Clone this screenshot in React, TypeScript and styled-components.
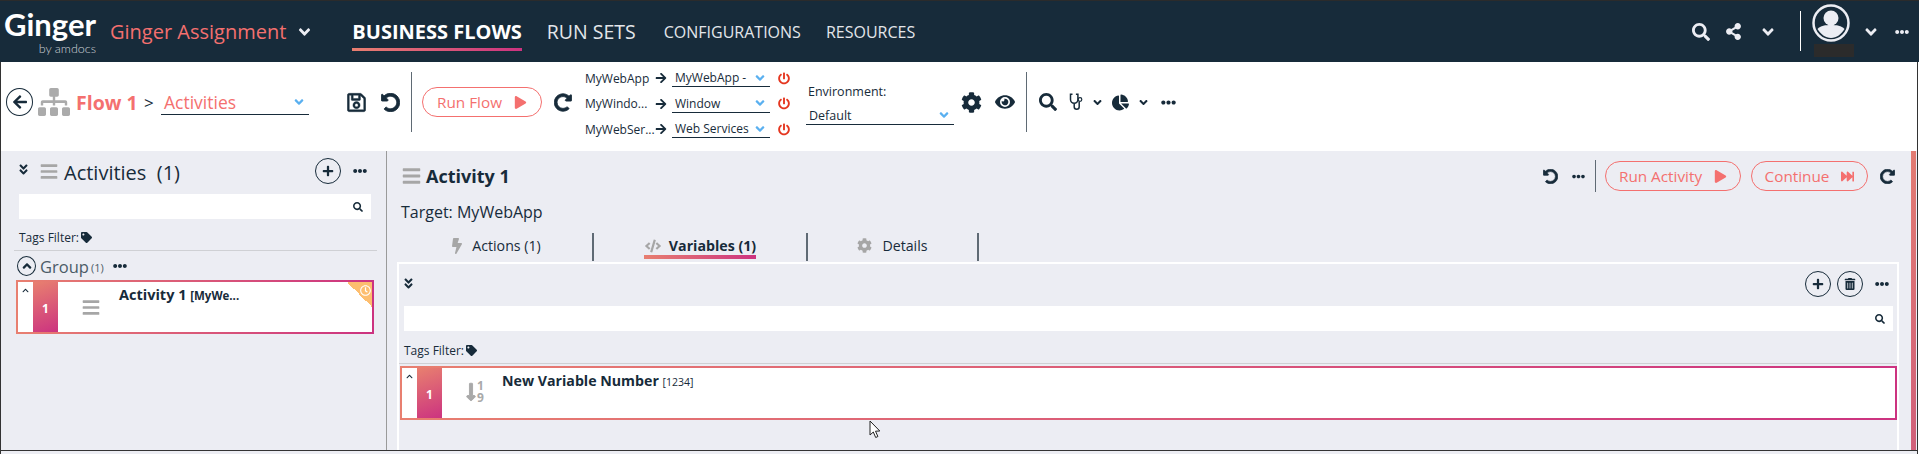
import styled, { createGlobalStyle } from 'styled-components';
import {
  FaAngleDoubleDown,
  FaAngleDown,
  FaAngleUp,
  FaArrowLeft,
  FaArrowRight,
  FaBars,
  FaBolt,
  FaChartPie,
  FaChevronUp,
  FaCode,
  FaCog,
  FaEllipsisH,
  FaEye,
  FaFastForward,
  FaLongArrowAltDown,
  FaPlay,
  FaPlus,
  FaPowerOff,
  FaRedoAlt,
  FaRegClock,
  FaRegSave,
  FaSearch,
  FaShareAlt,
  FaSitemap,
  FaTag,
  FaTrashAlt,
  FaUndoAlt,
} from 'react-icons/fa';

const NAVY = '#172b3a';
const CORAL = '#f4706f';
const PANEL = '#ecedf3';
const GRAD = 'linear-gradient(90deg, #e87f70, #cc3380)';

const agents = [
  { label: 'MyWebApp', value: 'MyWebApp -' },
  { label: 'MyWindo...', value: 'Window' },
  { label: 'MyWebSer...', value: 'Web Services' },
];

const App = () => (
  <Page>
    <GlobalStyle />
    <Header>
      <Logo>
        <LogoName>Ginger</LogoName>
        <LogoBy>by amdocs</LogoBy>
      </Logo>
      <ProjectName>Ginger Assignment</ProjectName>
      <Icon $ml={12} $w={13} $size={18} $color="#ecedf3"><FaAngleDown /></Icon>
      <NavItem $active $ml={41} $size={20}>BUSINESS FLOWS</NavItem>
      <NavItem $ml={25} $size={19.500}>RUN SETS</NavItem>
      <NavItem $ml={28} $size={16}>CONFIGURATIONS</NavItem>
      <NavItem $ml={25} $size={16}>RESOURCES</NavItem>
      <Spacer />
      <Icon $w={18} $size={18} $color="#ecedf3"><FaSearch /></Icon>
      <Icon $ml={15} $w={17} $size={17} $color="#ecedf3"><FaShareAlt /></Icon>
      <Icon $ml={20} $w={12} $size={18} $color="#ecedf3"><FaAngleDown /></Icon>
      <HeaderDivider />
      <Avatar viewBox="0 0 38 38">
        <circle cx="19" cy="19" r="17.500" fill="none" stroke="#ecedf3" strokeWidth="2.500" />
        <circle cx="19" cy="14" r="7.500" fill="#ecedf3" />
        <path d="M5.500 25c3-3.500 8-4 13.500-4s10.500.5 13.500 4c-3 5-8 9-13.500 9s-10.500-4-13.500-9z" fill="#ecedf3" />
      </Avatar>
      <Icon $ml={15} $w={12} $size={18} $color="#ecedf3"><FaAngleDown /></Icon>
      <Icon $ml={18} $w={14} $size={14} $color="#ecedf3"><FaEllipsisH /></Icon>
      <Redacted />
    </Header>

    <Body>
      <Toolbar>
        <BackButton><FaArrowLeft /></BackButton>
        <FlowMapIcon preserveAspectRatio="none" />
        <FlowName>Flow 1</FlowName>
        <Crumb>&gt;</Crumb>
        <Select $ml={8} $w={148} $h={25} $size={17.500} $color={CORAL}>
          <span>Activities</span>
          <FaAngleDown />
        </Select>
        <Icon $ml={38} $w={19} $size={21} $bold={10}><FaRegSave /></Icon>
        <Icon $ml={14} $w={20} $size={19} $bold={24}><FaUndoAlt /></Icon>
        <VDivider $ml={11} />
        <PillButton $ml={10} $w={120}>
          Run Flow
          <FaPlay />
        </PillButton>
        <Icon $ml={12} $w={18} $size={19} $bold={24}><FaRedoAlt /></Icon>
        <AgentGrid>
          {agents.map((a) => (
            <AgentRow key={a.label}>
              <AgentLabel>{a.label}</AgentLabel>
              <Icon $w={12} $size={12}><FaArrowRight /></Icon>
              <Select $ml={5} $w={98} $h={18} $size={12}>
                <span>{a.value}</span>
                <FaAngleDown />
              </Select>
              <Icon $ml={8} $w={12} $size={13} $color="#e5361f"><FaPowerOff /></Icon>
            </AgentRow>
          ))}
        </AgentGrid>
        <EnvColumn>
          <EnvLabel>Environment:</EnvLabel>
          <Select $ml={0} $w={148} $h={19} $size={12.500}>
            <span>Default</span>
            <FaAngleDown />
          </Select>
        </EnvColumn>
        <Icon $ml={7} $w={21} $size={21}><FaCog /></Icon>
        <Icon $ml={13} $w={20} $size={20}><FaEye /></Icon>
        <VDivider $ml={11} />
        <Icon $ml={12} $w={18} $size={18}><FaSearch /></Icon>
        <Stethoscope viewBox="0 0 14 18">
          <path d="M3.500 1.200H1.500v5.300a3.700 3.700 0 0 0 7.400 0V1.200H6.900M5.200 10.500v3.300a2.500 2.500 0 0 0 5 0V8.500" fill="none" stroke={NAVY} strokeWidth="1.500" />
          <circle cx="11" cy="6.500" r="1.800" fill="none" stroke={NAVY} strokeWidth="1.200" />
        </Stethoscope>
        <Icon $ml={10} $w={9} $size={13}><FaAngleDown /></Icon>
        <Icon $ml={10} $w={17} $size={17}><FaChartPie /></Icon>
        <Icon $ml={10} $w={9} $size={13}><FaAngleDown /></Icon>
        <Icon $ml={13} $w={15} $size={15}><FaEllipsisH /></Icon>
      </Toolbar>

      <Main>
        <LeftPanel>
          <PanelHead>
            <Icon $ml={17} $w={11} $size={13} $mt={-3}><FaAngleDoubleDown /></Icon>
            <Icon $ml={11} $w={18} $size={19} $color="#a6a6a6"><FaBars /></Icon>
            <PanelTitle>Activities&nbsp; (1)</PanelTitle>
            <Spacer />
            <RoundButton><FaPlus /></RoundButton>
            <Icon $ml={12} $w={14} $size={14}><FaEllipsisH /></Icon>
          </PanelHead>
          <SearchBar $mt={10} $mx="15px 0 18px">
            <FaSearch />
          </SearchBar>
          <TagsFilter $mt={10} $ml={18}>Tags Filter:<FaTag /></TagsFilter>
          <Rule $mx="5px 9px 0 13px" />
          <GroupRow>
            <GroupToggle><FaAngleUp /></GroupToggle>
            <GroupName>Group</GroupName>
            <GroupCount>(1)</GroupCount>
            <Icon $ml={9} $w={14} $size={14}><FaEllipsisH /></Icon>
          </GroupRow>
          <ItemCard $mx="4px 12px 0 15px">
            <Caret><FaChevronUp /></Caret>
            <Strip>1</Strip>
            <Icon $ml={24} $w={18} $size={19} $color="#a6a6a6"><FaBars /></Icon>
            <ItemTitle $ml={19}>Activity 1 <small>[MyWe...</small></ItemTitle>
            <Corner><FaRegClock /></Corner>
          </ItemCard>
        </LeftPanel>

        <RightPanel>
          <RightColumn>
            <DetailHead>
              <Icon $ml={15} $w={19} $size={20} $color="#a6a6a6"><FaBars /></Icon>
              <DetailTitle>Activity 1</DetailTitle>
              <Spacer />
              <Icon $w={15} $size={15} $bold={24}><FaUndoAlt /></Icon>
              <Icon $ml={14} $w={13} $size={13}><FaEllipsisH /></Icon>
              <VDivider $ml={10} $h={32} />
              <PillButton $ml={9} $w={136}>
                Run Activity
                <FaPlay />
              </PillButton>
              <PillButton $ml={10} $w={117}>
                Continue
                <FaFastForward />
              </PillButton>
              <Icon $ml={12} $w={15} $size={15} $bold={24}><FaRedoAlt /></Icon>
              <Icon $ml={16} $w={0} $size={1} />
            </DetailHead>
            <TargetLine>Target: MyWebApp</TargetLine>
            <Tabs>
              <Tab $w={193}>
                <TabLabel>
                  <Icon $w={10} $size={16} $color="#a6a6a6"><FaBolt /></Icon>
                  Actions (1)
                </TabLabel>
              </Tab>
              <Tab $w={214}>
                <TabLabel $active>
                  <Icon $w={18} $size={16} $color="#a6a6a6"><FaCode /></Icon>
                  Variables (1)
                </TabLabel>
              </Tab>
              <Tab $w={171}>
                <TabLabel>
                  <Icon $w={15} $size={15} $color="#a6a6a6"><FaCog /></Icon>
                  Details
                </TabLabel>
              </Tab>
            </Tabs>
            <TabBody>
              <TabBodyHead>
                <Icon $ml={4} $w={11} $size={13} $mt={-2}><FaAngleDoubleDown /></Icon>
                <Spacer />
                <RoundButton><FaPlus /></RoundButton>
                <RoundButton $ml={6}><FaTrashAlt /></RoundButton>
                <Icon $ml={12} $w={14} $size={14}><FaEllipsisH /></Icon>
              </TabBodyHead>
              <SearchBar $mt={9} $mx="4px 0 5px">
                <FaSearch />
              </SearchBar>
              <TagsFilter $mt={11} $ml={5}>Tags Filter:<FaTag /></TagsFilter>
              <Rule $mx="5px 0 0 0" />
              <ItemCard $mx="2px 0 0 1px">
                <Caret><FaChevronUp /></Caret>
                <Strip>1</Strip>
                <SortIcon>
                  <FaLongArrowAltDown />
                  <SortDigits>
                    <span>1</span>
                    <span>9</span>
                  </SortDigits>
                </SortIcon>
                <ItemTitle $ml={18} $size={14.200}>New Variable Number <VarValue>[1234]</VarValue></ItemTitle>
              </ItemCard>
            </TabBody>
          </RightColumn>
          <ScrollThumb />
        </RightPanel>
      </Main>
      <FootLine />
    </Body>

    <Pointer viewBox="0 0 12 19">
      <path d="M1 1v14l3.300-3 2.400 5.500 2.200-1-2.400-5.300 4.300-.2z" fill="#fff" stroke="#222" strokeWidth="1" />
    </Pointer>
  </Page>
);

export default App;

const GlobalStyle = createGlobalStyle`
  html, body {
    margin: 0;
    padding: 0;
    background: #fff;
  }
  * {
    box-sizing: border-box;
  }
`;

const Page = styled.div`
  position: relative;
  width: 1919px;
  height: 454px;
  overflow: hidden;
  font-family: 'Open Sans', 'Liberation Sans', sans-serif;
  color: ${NAVY};
`;

const Spacer = styled.div`
  flex: 1;
`;

const Icon = styled.span<{
  $ml?: number;
  $mt?: number;
  $w: number;
  $size: number;
  $color?: string;
  $bold?: number;
}>`
  display: inline-flex;
  align-items: center;
  justify-content: center;
  flex: none;
  margin-left: ${(p) => p.$ml ?? 0}px;
  margin-top: ${(p) => p.$mt ?? 0}px;
  width: ${(p) => p.$w}px;
  font-size: ${(p) => p.$size}px;
  color: ${(p) => p.$color ?? NAVY};
  ${(p) => p.$bold && `svg { stroke: currentColor; stroke-width: ${p.$bold}; }`}
`;

const Header = styled.header`
  position: relative;
  display: flex;
  align-items: center;
  height: 62px;
  padding-right: 10px;
  background: ${NAVY};
  border-top: 1px solid #2b2b2b;
`;

const Logo = styled.div`
  display: flex;
  flex-direction: column;
  align-items: flex-end;
  width: 96px;
  color: #fff;
`;

const LogoName = styled.div`
  font-family: Lato, 'Open Sans', sans-serif;
  font-size: 31px;
  font-weight: 700;
  line-height: 30px;
`;

const LogoBy = styled.div`
  margin-top: 3px;
  font-family: Lato, 'Open Sans', sans-serif;
  font-size: 12.500px;
  font-weight: 300;
  line-height: 13px;
  color: #cfd3d8;
`;

const ProjectName = styled.div`
  margin-left: 14px;
  font-size: 20px;
  color: ${CORAL};
`;

const NavItem = styled.div<{ $active?: boolean; $ml: number; $size: number }>`
  position: relative;
  display: flex;
  align-items: center;
  align-self: stretch;
  margin-left: ${(p) => p.$ml}px;
  font-size: ${(p) => p.$size}px;
  font-weight: ${(p) => (p.$active ? 700 : 400)};
  color: ${(p) => (p.$active ? '#fff' : '#e3e6ea')};
  ${(p) =>
    p.$active &&
    `&::after {
      content: '';
      position: absolute;
      left: 0;
      right: 0;
      bottom: 11px;
      height: 3px;
      background: ${GRAD};
    }`}
`;

const HeaderDivider = styled.div`
  width: 1px;
  height: 40px;
  margin: -1px 11px 0 26px;
  background: #fff;
`;

const Avatar = styled.svg`
  width: 38px;
  height: 38px;
  margin-top: -17px;
`;

const Redacted = styled.div`
  position: absolute;
  left: 1814px;
  top: 43px;
  width: 40px;
  height: 13px;
  background: #2b2b2b;
`;

const Body = styled.div`
  display: flex;
  flex-direction: column;
  width: 1918px;
  height: 392px;
  background: ${PANEL};
  border-left: 1px solid #333;
  border-right: 1px solid #333;
`;

const Toolbar = styled.div`
  display: flex;
  align-items: center;
  flex: none;
  height: 89px;
  padding: 0 0 9px 5px;
  background: #fff;
`;

const BackButton = styled.div`
  display: flex;
  align-items: center;
  justify-content: center;
  width: 27px;
  height: 28px;
  flex: none;
  border: 1.500px solid ${NAVY};
  border-radius: 50%;
  font-size: 16px;
`;

const FlowMapIcon = styled(FaSitemap)`
  flex: none;
  width: 32px;
  height: 28px;
  margin-left: 5px;
  color: #ababab;
`;

const FlowName = styled.div`
  width: 62px;
  margin-left: 6px;
  flex: none;
  font-size: 19.500px;
  font-weight: 700;
  color: ${CORAL};
  white-space: nowrap;
`;

const Crumb = styled.div`
  margin-left: 6px;
  width: 9px;
  flex: none;
  font-size: 17px;
`;

const Select = styled.div<{ $ml: number; $w: number; $h: number; $size: number; $color?: string }>`
  display: flex;
  align-items: center;
  justify-content: space-between;
  flex: none;
  margin-left: ${(p) => p.$ml}px;
  width: ${(p) => p.$w}px;
  height: ${(p) => p.$h}px;
  padding: 0 3px;
  border-bottom: 1px solid ${NAVY};
  font-size: ${(p) => p.$size}px;
  color: ${(p) => p.$color ?? NAVY};
  white-space: nowrap;
  svg {
    flex: none;
    color: #5ab0f0;
    font-size: 14px;
  }
`;

const VDivider = styled.div<{ $ml: number; $h?: number }>`
  flex: none;
  width: 1px;
  height: ${(p) => p.$h ?? 60}px;
  margin-left: ${(p) => p.$ml}px;
  background: #5f6a74;
`;

const PillButton = styled.div<{ $ml: number; $w: number }>`
  display: flex;
  align-items: center;
  justify-content: center;
  gap: 12px;
  flex: none;
  width: ${(p) => p.$w}px;
  height: 30px;
  margin-left: ${(p) => p.$ml}px;
  border: 1px solid ${CORAL};
  border-radius: 15px;
  font-size: 15.300px;
  color: ${CORAL};
  svg {
    font-size: 13px;
  }
`;

const AgentGrid = styled.div`
  display: flex;
  flex-direction: column;
  flex: none;
  gap: 3px;
  margin: 3px 0 0 13px;
`;

const AgentRow = styled.div`
  display: flex;
  align-items: center;
  height: 22.500px;
`;

const AgentLabel = styled.div`
  width: 70px;
  font-size: 12px;
  white-space: nowrap;
`;

const EnvColumn = styled.div`
  display: flex;
  flex-direction: column;
  flex: none;
  gap: 6px;
  margin: 4px 0 0 16px;
`;

const EnvLabel = styled.div`
  margin-left: 2px;
  font-size: 12.500px;
`;

const Stethoscope = styled.svg`
  flex: none;
  width: 14px;
  height: 18px;
  margin-left: 12px;
`;

const Main = styled.div`
  display: flex;
  flex: none;
  height: 299px;
  background: ${PANEL};
`;

const LeftPanel = styled.div`
  flex: none;
  width: 386px;
  border-right: 1px solid #9a9a9a;
`;

const PanelHead = styled.div`
  display: flex;
  align-items: center;
  height: 26px;
  margin-top: 7px;
  padding-right: 19px;
`;

const PanelTitle = styled.div`
  margin: 3px 0 0 6px;
  font-size: 20px;
`;

const RoundButton = styled.div<{ $ml?: number }>`
  display: flex;
  align-items: center;
  justify-content: center;
  flex: none;
  width: 26px;
  height: 26px;
  margin-left: ${(p) => p.$ml ?? 0}px;
  border: 1px solid ${NAVY};
  border-radius: 50%;
  font-size: 12px;
`;

const SearchBar = styled.div<{ $mt: number; $mx: string }>`
  display: flex;
  align-items: center;
  justify-content: flex-end;
  height: 25px;
  margin: ${(p) => p.$mt}px ${(p) => p.$mx};
  padding-right: 8px;
  background: #fff;
  font-size: 10px;
`;

const TagsFilter = styled.div<{ $mt: number; $ml: number }>`
  display: flex;
  align-items: center;
  gap: 2px;
  height: 16px;
  margin: ${(p) => p.$mt}px 0 0 ${(p) => p.$ml}px;
  font-size: 12px;
  svg {
    font-size: 11px;
  }
`;

const Rule = styled.div<{ $mx: string }>`
  height: 1px;
  margin: ${(p) => p.$mx};
  background: #cfd0d4;
`;

const GroupRow = styled.div`
  display: flex;
  align-items: center;
  height: 20px;
  margin: 5px 0 0 16px;
`;

const GroupToggle = styled.div`
  display: flex;
  align-items: center;
  justify-content: center;
  width: 19px;
  height: 20px;
  border: 1px solid ${NAVY};
  border-radius: 50%;
  font-size: 14px;
`;

const GroupName = styled.div`
  margin-left: 4px;
  font-size: 16.500px;
  color: #4b5b67;
`;

const GroupCount = styled.div`
  margin: 3px 0 0 2px;
  font-size: 11px;
  color: #4b5b67;
`;

const ItemCard = styled.div<{ $mx: string }>`
  position: relative;
  display: flex;
  height: 54px;
  margin: ${(p) => p.$mx};
  background: #fff;
  border: 2px solid;
  border-image: ${GRAD} 1;
`;

const Caret = styled.div`
  flex: none;
  width: 15px;
  padding: 5px 0 0 4px;
  font-size: 7px;
  line-height: 7px;
`;

const Strip = styled.div`
  display: flex;
  align-items: center;
  justify-content: center;
  flex: none;
  width: 25px;
  padding-top: 2px;
  background: linear-gradient(160deg, #e8806f, #cc3380);
  color: #fff;
  font-size: 12px;
  font-weight: 700;
`;

const SortIcon = styled.div`
  display: flex;
  align-items: center;
  flex: none;
  width: 18px;
  height: 24px;
  margin: 12px 0 0 24px;
  color: #a9a9a9;
  svg {
    flex: none;
    width: 10px;
    height: 24px;
    stroke: currentColor;
    stroke-width: 24;
  }
`;

const SortDigits = styled.div`
  display: flex;
  flex-direction: column;
  margin-left: 1px;
  font-size: 12px;
  font-weight: 700;
  line-height: 12px;
`;

const ItemTitle = styled.div<{ $ml: number; $size?: number }>`
  margin: 3px 0 0 ${(p) => p.$ml}px;
  font-size: ${(p) => p.$size ?? 14.500}px;
  font-weight: 700;
  line-height: 20px;
  white-space: nowrap;
  small {
    font-size: 11.500px;
  }
`;

const VarValue = styled.span`
  font-size: 10.500px;
  font-weight: 400;
`;

const Corner = styled.div`
  position: absolute;
  top: 0;
  right: 0;
  width: 25px;
  height: 25px;
  background: linear-gradient(225deg, #fdbe6f 50%, transparent 50%);
  color: #fff;
  font-size: 11px;
  line-height: 11px;
  svg {
    position: absolute;
    top: 3px;
    right: 1px;
  }
`;

const RightPanel = styled.div`
  display: flex;
  flex: 1;
  min-width: 0;
`;

const RightColumn = styled.div`
  display: flex;
  flex-direction: column;
  width: 1524px;
  flex: none;
`;

const DetailHead = styled.div`
  display: flex;
  align-items: center;
  height: 32px;
  margin-top: 9px;
`;

const DetailTitle = styled.div`
  margin-left: 5px;
  font-size: 18px;
  font-weight: 700;
`;

const TargetLine = styled.div`
  height: 20px;
  margin: 10px 0 0 14px;
  font-size: 16px;
  line-height: 20px;
`;

const Tabs = styled.div`
  display: flex;
  height: 28px;
  margin: 11px 0 0 14px;
`;

const Tab = styled.div<{ $w: number }>`
  display: flex;
  justify-content: center;
  width: ${(p) => p.$w}px;
  border-right: 2px solid #5f6a74;
`;

const TabLabel = styled.div<{ $active?: boolean }>`
  display: flex;
  align-items: center;
  gap: ${(p) => (p.$active ? 7 : 10)}px;
  height: ${(p) => (p.$active ? 26 : 25)}px;
  font-size: 14.200px;
  font-weight: ${(p) => (p.$active ? 700 : 400)};
  ${(p) => p.$active && `border-bottom: 4px solid; border-image: ${GRAD} 1; padding-top: 3px;`}
`;

const TabBody = styled.div`
  flex: 1;
  min-height: 0;
  width: 1502px;
  margin: 1px 0 0 10px;
  border: 2px solid #fff;
  border-bottom: none;
`;

const TabBodyHead = styled.div`
  display: flex;
  align-items: center;
  height: 26px;
  margin-top: 7px;
  padding-right: 8px;
`;

const ScrollThumb = styled.div`
  flex: none;
  width: 5px;
  background: linear-gradient(180deg, #e27b72, #d0607a);
`;

const FootLine = styled.div`
  flex: none;
  height: 1px;
  background: #333;
`;

const Pointer = styled.svg`
  position: absolute;
  left: 869px;
  top: 420px;
  width: 12px;
  height: 19px;
`;
